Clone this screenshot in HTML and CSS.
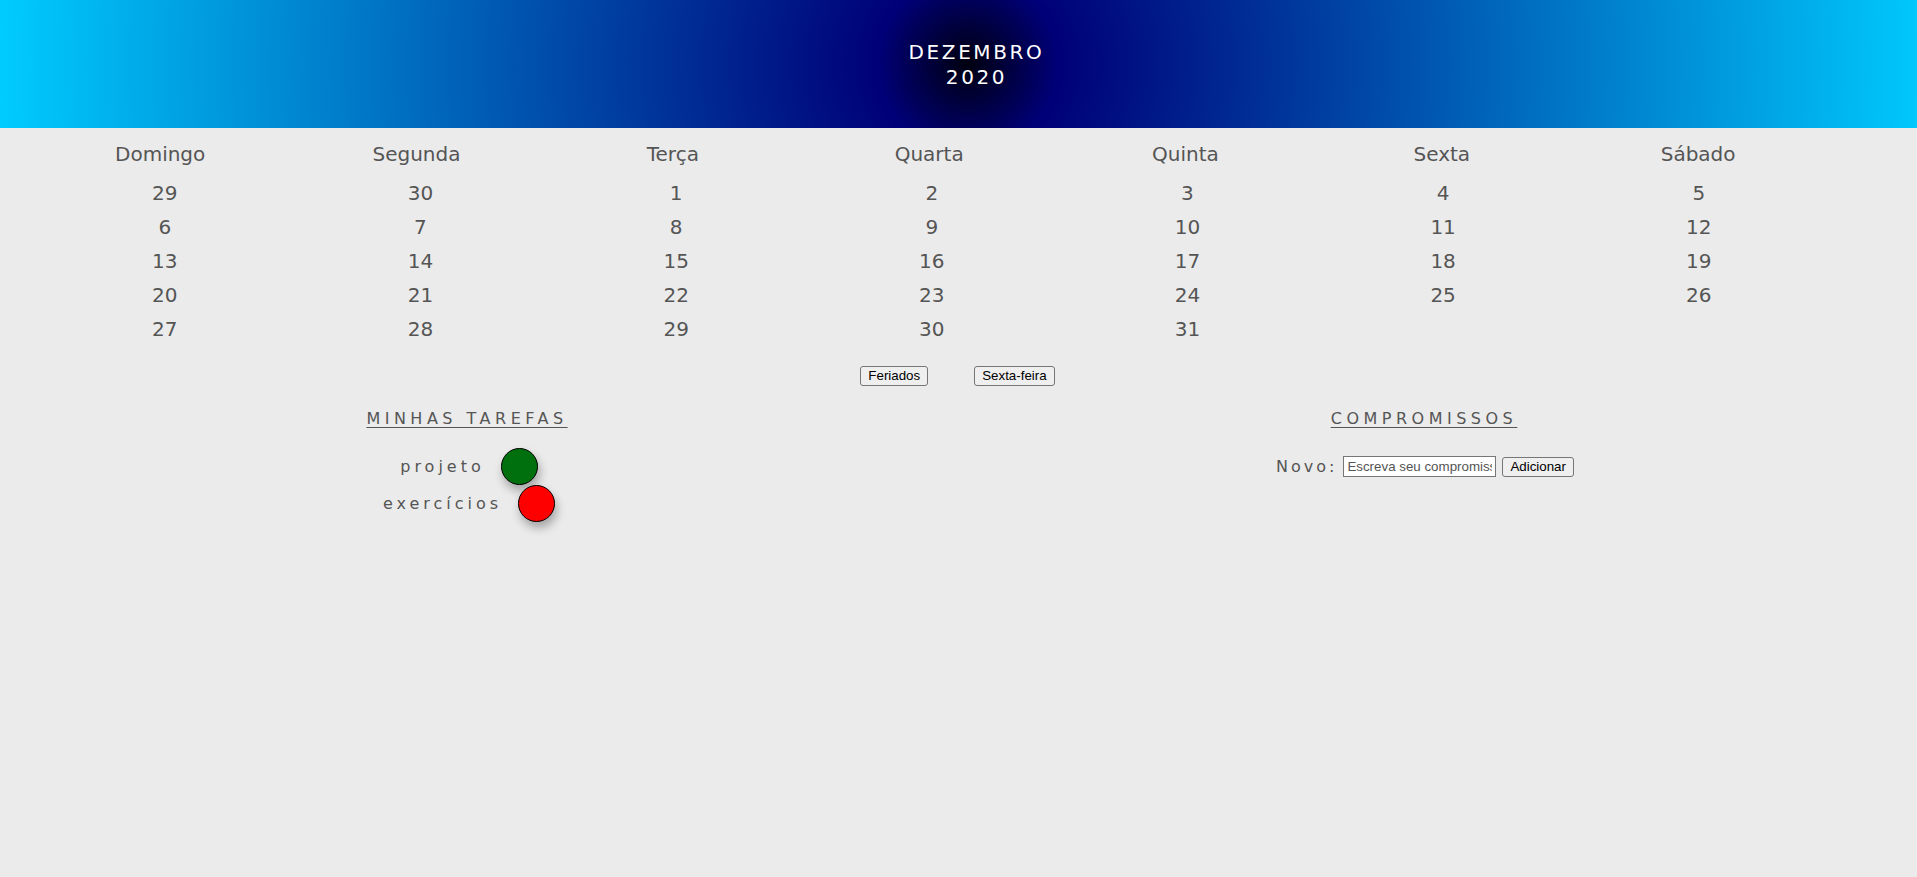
FILE: index.html
```html
<!DOCTYPE html>
<html lang="pt-BR">
<head>
<meta charset="utf-8">
<title>Calendário - Dezembro 2020</title>
<link rel="stylesheet" href="styles.css">
</head>
<body>
<header class="top">
  <div class="month">DEZEMBRO</div>
  <div class="year">2020</div>
</header>

<section class="calendar">
  <div class="weekdays">
    <div>Domingo</div><div>Segunda</div><div>Terça</div><div>Quarta</div><div>Quinta</div><div>Sexta</div><div>Sábado</div>
  </div>
  <div class="days">
    <div>29</div><div>30</div><div>1</div><div>2</div><div>3</div><div>4</div><div>5</div>
    <div>6</div><div>7</div><div>8</div><div>9</div><div>10</div><div>11</div><div>12</div>
    <div>13</div><div>14</div><div>15</div><div>16</div><div>17</div><div>18</div><div>19</div>
    <div>20</div><div>21</div><div>22</div><div>23</div><div>24</div><div>25</div><div>26</div>
    <div>27</div><div>28</div><div>29</div><div>30</div><div>31</div><div></div><div></div>
  </div>
</section>

<div class="actions">
  <button class="btn">Feriados</button>
  <button class="btn">Sexta-feira</button>
</div>

<main class="panels">
  <section class="panel">
    <h2 class="panel-title">MINHAS TAREFAS</h2>
    <div class="task"><span class="task-name">projeto</span><span class="dot dot-green"></span></div>
    <div class="task"><span class="task-name">exercícios</span><span class="dot dot-red"></span></div>
  </section>
  <section class="panel">
    <h2 class="panel-title">COMPROMISSOS</h2>
    <div class="new-row">
      <label class="new-label">Novo:</label>
      <input class="new-input" type="text" placeholder="Escreva seu compromisso">
      <button class="btn">Adicionar</button>
    </div>
  </section>
</main>
</body>
</html>
```

FILE: styles.css
```css
html, body {
  margin: 0;
  padding: 0;
}

body {
  background: #ebebeb;
  color: #555;
  font-family: "DejaVu Sans", Verdana, sans-serif;
  min-height: 877px;
  overflow: hidden;
}

.top {
  height: 128px;
  box-sizing: border-box;
  padding-left: 36px;
  padding-top: 1px;
  background: radial-gradient(circle at 968px 50%, #000010 0px, #000078 90px, #00ccff 100%);
  color: #fff;
  display: flex;
  flex-direction: column;
  align-items: center;
  justify-content: center;
  font-size: 20px;
  line-height: 24.5px;
  letter-spacing: 2.6px;
}

.calendar {
  padding-top: 15px;
}

.weekdays {
  display: grid;
  grid-template-columns: repeat(7, 256.33px);
  padding-left: 32px;
  font-size: 20px;
  line-height: 23px;
  text-align: center;
  margin-bottom: 10px;
}

.days {
  display: grid;
  grid-template-columns: repeat(7, 255.67px);
  padding-left: 37px;
  font-size: 20px;
  line-height: 34px;
  text-align: center;
}

.actions {
  display: flex;
  justify-content: center;
  gap: 46px;
  margin-top: 20px;
  padding-right: 2px;
}

.btn {
  font-family: "Liberation Sans", Arial, sans-serif;
  font-size: 13.33px;
  color: #000;
  background: #efefef;
  border: 1px solid #767676;
  border-radius: 3px;
  height: 20px;
  padding: 0 7px;
  line-height: 16px;
  margin: 0;
}

.panels {
  display: flex;
  gap: 23px;
  width: 1891px;
  margin-top: 23px;
}

.panel {
  flex: 1;
  display: flex;
  flex-direction: column;
  align-items: center;
}

.panel-title {
  margin: 0 0 20px 0;
  font-size: 16px;
  line-height: 19px;
  font-weight: normal;
  letter-spacing: 4.5px;
  text-decoration: underline;
  text-underline-offset: 3px;
  color: #555;
}

.task {
  display: flex;
  align-items: center;
  gap: 16px;
  height: 37px;
  padding-left: 4px;
}

.task-name {
  font-size: 16px;
  letter-spacing: 4px;
}

.dot {
  width: 35px;
  height: 35px;
  border: 1px solid #000;
  border-radius: 50%;
  box-shadow: 2px 6px 10px rgba(0, 0, 0, 0.3);
}

.dot-green {
  background: #00700e;
}

.dot-red {
  background: #ff0000;
}

.new-row {
  display: flex;
  align-items: center;
  height: 37px;
  gap: 6px;
  padding-left: 2px;
}

.new-label {
  font-size: 16px;
  letter-spacing: 3px;
}

.new-input {
  width: 153px;
  height: 21px;
  box-sizing: border-box;
  border: 1px solid #767676;
  background: #fff;
  padding: 1px 3px;
  font-family: "Liberation Sans", Arial, sans-serif;
  font-size: 13.33px;
  margin: 0;
}

.new-input::placeholder {
  color: #555;
}
```
